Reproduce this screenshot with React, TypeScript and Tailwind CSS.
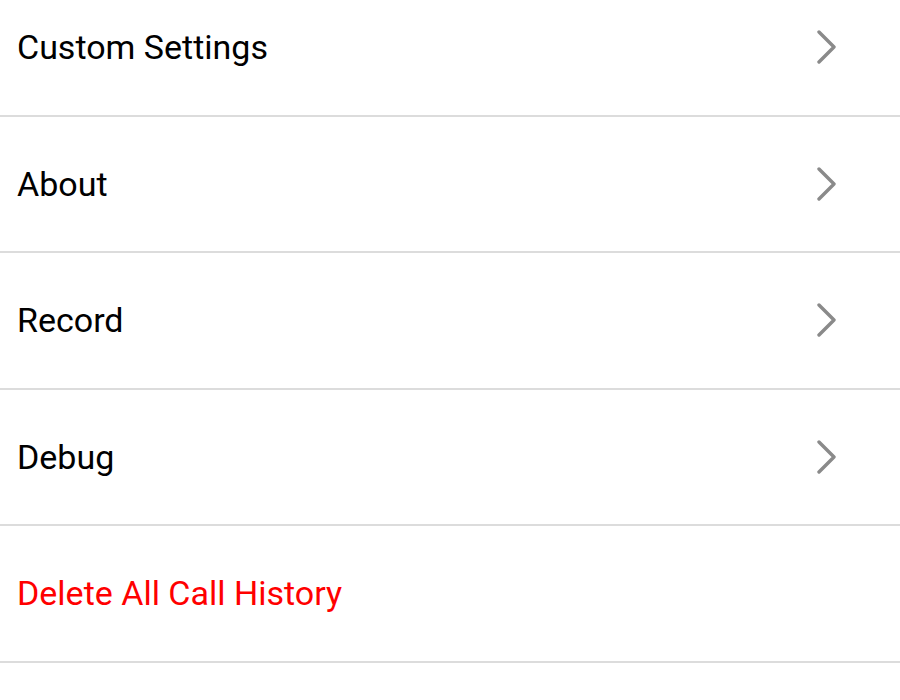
const rows = [
	{ label: "Custom Settings", arrow: true },
	{ label: "About", arrow: true },
	{ label: "Record", arrow: true },
	{ label: "Debug", arrow: true },
	{ label: "Delete All Call History", arrow: false, danger: true },
];

function Chevron() {
	return (
		<svg width="22" height="34" viewBox="0 0 22 34" fill="none" className="mr-[62px]">
			<path d="M3 2 L18 17 L3 32" stroke="#8a8a8a" strokeWidth="3.4" strokeLinecap="round" strokeLinejoin="round" />
		</svg>
	);
}

export default function App() {
	return (
		<div className="w-[900px] h-[700px] overflow-hidden bg-white font-['Roboto',sans-serif]">
			<div className="-mt-[20px] flex flex-col">
				{rows.map((r) => (
					<div key={r.label} className="flex flex-col">
						<div className="h-[134.5px] flex items-center justify-between pl-[17px]">
							<span className={`text-[34px] leading-none ${r.danger ? "text-[#ff0000]" : "text-black"}`}>{r.label}</span>
							{r.arrow && <Chevron />}
						</div>
						<div className="h-[2px] bg-[#dcdcdc]"></div>
					</div>
				))}
			</div>
		</div>
	);
}
